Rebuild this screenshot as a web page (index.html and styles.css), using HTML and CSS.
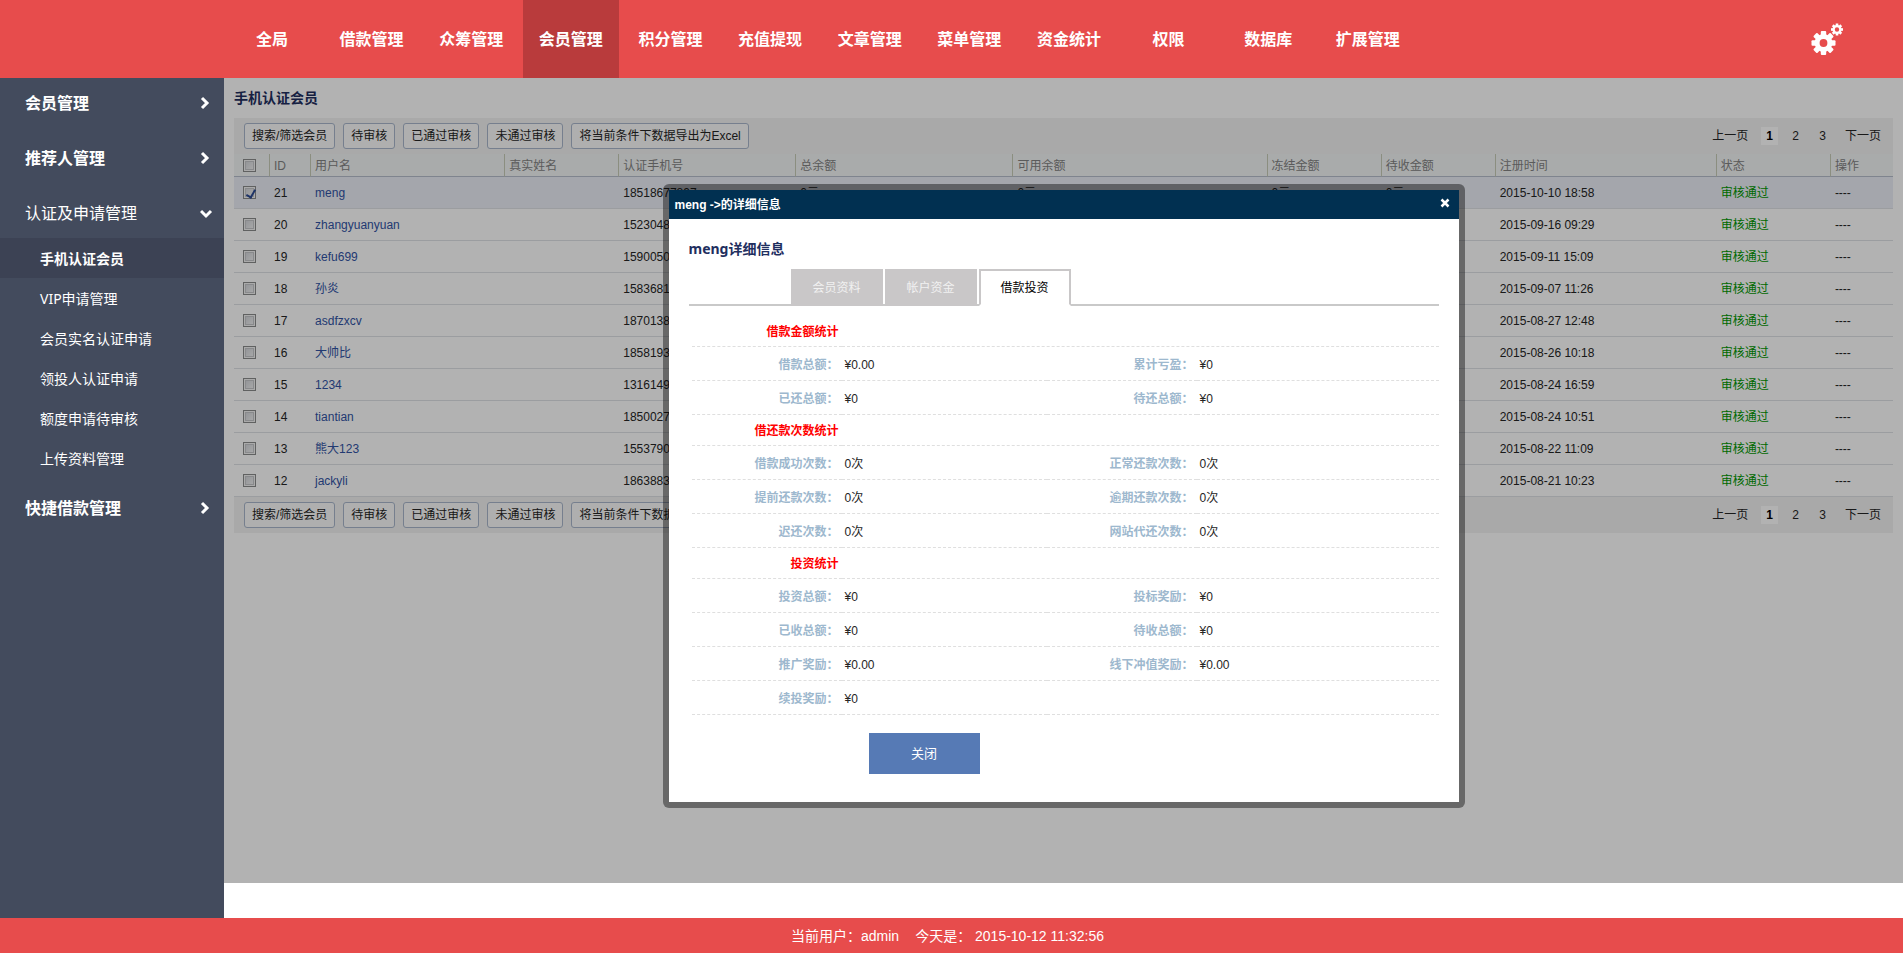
FILE: index.html
```html
<!DOCTYPE html>
<html lang="zh-CN">
<head>
<meta charset="utf-8">
<title>手机认证会员</title>
<link rel="stylesheet" href="styles.css">
</head>
<body>
<header class="topbar">
  <nav class="topnav">
    <a href="#">全局</a>
    <a href="#">借款管理</a>
    <a href="#">众筹管理</a>
    <a href="#" class="active">会员管理</a>
    <a href="#">积分管理</a>
    <a href="#">充值提现</a>
    <a href="#">文章管理</a>
    <a href="#">菜单管理</a>
    <a href="#">资金统计</a>
    <a href="#">权限</a>
    <a href="#">数据库</a>
    <a href="#">扩展管理</a>
  </nav>
  <button type="button" class="gear" aria-label="设置">
    <svg width="34" height="34" viewBox="0 0 34 34">
      <g transform="translate(12.5 21)">
        <circle r="6.4" fill="none" stroke="#fff" stroke-width="5"/>
        <g fill="#fff">
          <rect x="-2.7" y="-12" width="5.4" height="5" rx="1"/>
          <rect x="-2.7" y="-12" width="5.4" height="5" rx="1" transform="rotate(45)"/>
          <rect x="-2.7" y="-12" width="5.4" height="5" rx="1" transform="rotate(90)"/>
          <rect x="-2.7" y="-12" width="5.4" height="5" rx="1" transform="rotate(135)"/>
          <rect x="-2.7" y="-12" width="5.4" height="5" rx="1" transform="rotate(180)"/>
          <rect x="-2.7" y="-12" width="5.4" height="5" rx="1" transform="rotate(225)"/>
          <rect x="-2.7" y="-12" width="5.4" height="5" rx="1" transform="rotate(270)"/>
          <rect x="-2.7" y="-12" width="5.4" height="5" rx="1" transform="rotate(315)"/>
        </g>
      </g>
      <g transform="translate(26 7.5)">
        <circle r="3.4" fill="none" stroke="#fff" stroke-width="2.4"/>
        <g fill="#fff">
          <rect x="-1.3" y="-6" width="2.6" height="2.6"/>
          <rect x="-1.3" y="-6" width="2.6" height="2.6" transform="rotate(45)"/>
          <rect x="-1.3" y="-6" width="2.6" height="2.6" transform="rotate(90)"/>
          <rect x="-1.3" y="-6" width="2.6" height="2.6" transform="rotate(135)"/>
          <rect x="-1.3" y="-6" width="2.6" height="2.6" transform="rotate(180)"/>
          <rect x="-1.3" y="-6" width="2.6" height="2.6" transform="rotate(225)"/>
          <rect x="-1.3" y="-6" width="2.6" height="2.6" transform="rotate(270)"/>
          <rect x="-1.3" y="-6" width="2.6" height="2.6" transform="rotate(315)"/>
        </g>
      </g>
    </svg>
  </button>
</header>

<div class="middle">
  <nav class="sidebar">
    <a href="#" class="group">会员管理<svg width="14" height="14" viewBox="0 0 14 14"><path d="M2 2l5 5-5 5"/></svg></a>
    <a href="#" class="group">推荐人管理<svg width="14" height="14" viewBox="0 0 14 14"><path d="M2 2l5 5-5 5"/></svg></a>
    <a href="#" class="group open">认证及申请管理<svg width="14" height="14" viewBox="0 0 14 14"><path d="M1 5l5 5 5-5"/></svg></a>
    <div class="submenu">
      <a href="#" class="active">手机认证会员</a>
      <a href="#">VIP申请管理</a>
      <a href="#">会员实名认证申请</a>
      <a href="#">领投人认证申请</a>
      <a href="#">额度申请待审核</a>
      <a href="#">上传资料管理</a>
    </div>
    <a href="#" class="group">快捷借款管理<svg width="14" height="14" viewBox="0 0 14 14"><path d="M2 2l5 5-5 5"/></svg></a>
  </nav>

  <div class="frame">
    <main class="content">
      <h1>手机认证会员</h1>
      <div class="toolbar">
        <button type="button">搜索/筛选会员</button>
        <button type="button">待审核</button>
        <button type="button">已通过审核</button>
        <button type="button">未通过审核</button>
        <button type="button">将当前条件下数据导出为Excel</button>
        <nav class="pager"><a href="#">上一页</a><span>1</span><a href="#">2</a><a href="#">3</a><a href="#">下一页</a></nav>
      </div>
      <table class="list">
        <colgroup>
          <col class="c-check"><col class="c-id"><col class="c-user"><col class="c-name"><col class="c-phone"><col class="c-total"><col class="c-avail"><col class="c-money"><col class="c-money"><col class="c-time"><col class="c-money"><col class="c-op">
        </colgroup>
        <thead>
          <tr><th><input type="checkbox" aria-label="全选"></th><th>ID</th><th>用户名</th><th>真实姓名</th><th>认证手机号</th><th>总余额</th><th>可用余额</th><th>冻结金额</th><th>待收金额</th><th>注册时间</th><th>状态</th><th>操作</th></tr>
        </thead>
        <tbody>
          <tr class="selected"><td><input type="checkbox" aria-label="选择 21" checked></td><td>21</td><td><a href="#">meng</a></td><td></td><td>18518677897</td><td>0元</td><td>0元</td><td>0元</td><td>0元</td><td>2015-10-10 18:58</td><td class="ok">审核通过</td><td>----</td></tr>
          <tr><td><input type="checkbox" aria-label="选择 20"></td><td>20</td><td><a href="#">zhangyuanyuan</a></td><td></td><td>1523048</td><td></td><td></td><td></td><td></td><td>2015-09-16 09:29</td><td class="ok">审核通过</td><td>----</td></tr>
          <tr><td><input type="checkbox" aria-label="选择 19"></td><td>19</td><td><a href="#">kefu699</a></td><td></td><td>1590050</td><td></td><td></td><td></td><td></td><td>2015-09-11 15:09</td><td class="ok">审核通过</td><td>----</td></tr>
          <tr><td><input type="checkbox" aria-label="选择 18"></td><td>18</td><td><a href="#">孙炎</a></td><td></td><td>1583681</td><td></td><td></td><td></td><td></td><td>2015-09-07 11:26</td><td class="ok">审核通过</td><td>----</td></tr>
          <tr><td><input type="checkbox" aria-label="选择 17"></td><td>17</td><td><a href="#">asdfzxcv</a></td><td></td><td>1870138</td><td></td><td></td><td></td><td></td><td>2015-08-27 12:48</td><td class="ok">审核通过</td><td>----</td></tr>
          <tr><td><input type="checkbox" aria-label="选择 16"></td><td>16</td><td><a href="#">大帅比</a></td><td></td><td>1858193</td><td></td><td></td><td></td><td></td><td>2015-08-26 10:18</td><td class="ok">审核通过</td><td>----</td></tr>
          <tr><td><input type="checkbox" aria-label="选择 15"></td><td>15</td><td><a href="#">1234</a></td><td></td><td>1316149</td><td></td><td></td><td></td><td></td><td>2015-08-24 16:59</td><td class="ok">审核通过</td><td>----</td></tr>
          <tr><td><input type="checkbox" aria-label="选择 14"></td><td>14</td><td><a href="#">tiantian</a></td><td></td><td>1850027</td><td></td><td></td><td></td><td></td><td>2015-08-24 10:51</td><td class="ok">审核通过</td><td>----</td></tr>
          <tr><td><input type="checkbox" aria-label="选择 13"></td><td>13</td><td><a href="#">熊大123</a></td><td></td><td>1553790</td><td></td><td></td><td></td><td></td><td>2015-08-22 11:09</td><td class="ok">审核通过</td><td>----</td></tr>
          <tr><td><input type="checkbox" aria-label="选择 12"></td><td>12</td><td><a href="#">jackyli</a></td><td></td><td>1863883</td><td></td><td></td><td></td><td></td><td>2015-08-21 10:23</td><td class="ok">审核通过</td><td>----</td></tr>
        </tbody>
      </table>
      <div class="toolbar">
        <button type="button">搜索/筛选会员</button>
        <button type="button">待审核</button>
        <button type="button">已通过审核</button>
        <button type="button">未通过审核</button>
        <button type="button">将当前条件下数据导出为Excel</button>
        <nav class="pager"><a href="#">上一页</a><span>1</span><a href="#">2</a><a href="#">3</a><a href="#">下一页</a></nav>
      </div>
    </main>

    <div class="overlay">
      <section class="dialog" role="dialog" aria-labelledby="dialog-title">
        <div class="dialog-title">
          <span id="dialog-title">meng -&gt;的详细信息</span>
          <button type="button" aria-label="关闭窗口"><svg width="10" height="10" viewBox="0 0 10 10"><path d="M1.5 1.5l7 7M8.5 1.5l-7 7"/></svg></button>
        </div>
        <div class="dialog-body">
          <h2>meng详细信息</h2>
          <div class="tabs" role="tablist">
            <button type="button" role="tab">会员资料</button>
            <button type="button" role="tab">帐户资金</button>
            <button type="button" role="tab" class="active" aria-selected="true">借款投资</button>
          </div>
          <table class="detail">
            <colgroup><col class="d-label"><col class="d-value"><col class="d-label"><col class="d-last"></colgroup>
            <tbody>
              <tr class="section"><th>借款金额统计</th><td colspan="3"></td></tr>
              <tr><th>借款总额<span class="colon">：</span></th><td>¥0.00</td><th>累计亏盈<span class="colon">：</span></th><td>¥0</td></tr>
              <tr><th>已还总额<span class="colon">：</span></th><td>¥0</td><th>待还总额<span class="colon">：</span></th><td>¥0</td></tr>
              <tr class="section"><th>借还款次数统计</th><td colspan="3"></td></tr>
              <tr><th>借款成功次数<span class="colon">：</span></th><td>0次</td><th>正常还款次数<span class="colon">：</span></th><td>0次</td></tr>
              <tr><th>提前还款次数<span class="colon">：</span></th><td>0次</td><th>逾期还款次数<span class="colon">：</span></th><td>0次</td></tr>
              <tr><th>迟还次数<span class="colon">：</span></th><td>0次</td><th>网站代还次数<span class="colon">：</span></th><td>0次</td></tr>
              <tr class="section"><th>投资统计</th><td colspan="3"></td></tr>
              <tr><th>投资总额<span class="colon">：</span></th><td>¥0</td><th>投标奖励<span class="colon">：</span></th><td>¥0</td></tr>
              <tr><th>已收总额<span class="colon">：</span></th><td>¥0</td><th>待收总额<span class="colon">：</span></th><td>¥0</td></tr>
              <tr><th>推广奖励<span class="colon">：</span></th><td>¥0.00</td><th>线下冲值奖励<span class="colon">：</span></th><td>¥0.00</td></tr>
              <tr><th>续投奖励<span class="colon">：</span></th><td>¥0</td><td colspan="2"></td></tr>
            </tbody>
          </table>
          <button type="button" class="close">关闭</button>
        </div>
      </section>
    </div>
  </div>
</div>

<footer class="footer"><span>当前用户<span class="colon">：</span>admin</span><span>今天是<span class="colon">：</span> 2015-10-12 11:32:56</span></footer>
</body>
</html>
```

FILE: styles.css
```css
* {
  box-sizing: border-box;
}

body {
  margin: 0;
  min-height: 100vh;
  display: flex;
  flex-direction: column;
  background: #fff;
  color: #252525;
  font: 12px/18px "Liberation Sans", "Noto Sans CJK SC", sans-serif;
}

a {
  color: inherit;
  text-decoration: none;
}

button {
  font: inherit;
  color: inherit;
  cursor: pointer;
}

/* full-width colon centred in its cell */
.colon {
  font-family: "Noto Sans CJK TC", sans-serif;
  line-height: 1;
}

/* top bar */
.topbar {
  display: flex;
  justify-content: space-between;
  align-items: center;
  height: 78px;
  padding: 0 58px 0 224px;
  background: #e74c4c;
  color: #fff;
}

.topnav {
  font-size: 13px;
  white-space: nowrap;
}

.topnav a {
  display: inline-block;
  width: 96px;
  height: 78px;
  font-size: 16px;
  font-weight: bold;
  line-height: 80px;
  text-align: center;
  vertical-align: top;
}

.topnav a.active {
  background: #b93b3c;
}

.gear {
  display: flex;
  padding: 0;
  border: 0;
  background: none;
}

/* side menu */
.middle {
  flex: 1;
  display: flex;
}

.sidebar {
  flex: none;
  width: 224px;
  background: #434b5d;
  color: #fff;
  font-family: "Noto Sans", "Noto Sans CJK SC", sans-serif;
}

.group {
  display: flex;
  justify-content: space-between;
  align-items: center;
  height: 50px;
  margin-bottom: 5px;
  padding: 0 10px 0 25px;
  font-size: 16px;
  font-weight: bold;
}

.group svg {
  fill: none;
  stroke: #fff;
  stroke-width: 3;
}

.group.open {
  margin-bottom: 0;
  font-weight: normal;
}

.submenu {
  margin-bottom: 5px;
}

.submenu a {
  display: block;
  height: 40px;
  padding-left: 40px;
  font-size: 14px;
  line-height: 42px;
}

.submenu a.active {
  background: #3c4254;
  font-weight: bold;
}

/* content */
.frame {
  flex: 1;
  position: relative;
  min-width: 0;
  margin-bottom: 35px;
}

.content {
  padding: 0 10px;
}

h1 {
  height: 40px;
  margin: 0;
  color: #1f2f5f;
  font-size: 14px;
  line-height: 40px;
}

.toolbar {
  display: flex;
  align-items: center;
  gap: 8px;
  height: 36px;
  padding: 0 7px 0 10px;
  background: #f2f2f2;
}

.toolbar button {
  height: 26px;
  padding: 0 7px;
  border: 1px solid #a9b6cc;
  border-radius: 3px;
  background: #fbfbfb;
  line-height: 24px;
  white-space: nowrap;
}

.pager {
  display: flex;
  gap: 8px;
  margin-left: auto;
}

.pager a,
.pager span {
  min-width: 19px;
  padding: 0 5px;
  text-align: center;
}

.pager span {
  min-width: 0;
  background: #fff;
  color: #000;
  font-weight: bold;
}

.list,
.detail {
  width: 100%;
  border-collapse: separate;
  border-spacing: 0;
  table-layout: fixed;
}

.c-check { width: 36px; }
.c-id { width: 41px; }
.c-user { width: 194px; }
.c-name { width: 114px; }
.c-phone { width: 177px; }
.c-total { width: 217px; }
.c-avail { width: 254px; }
.c-money { width: 114px; }
.c-time { width: 221px; }
.c-op { width: 62px; }

.list th {
  height: 23px;
  padding: 2px 4px 0;
  border-right: 1px solid #c8ccb8;
  border-bottom: 1px solid #b7bdcc;
  background: #f2f5f5;
  color: #838383;
  font-weight: normal;
  line-height: 20px;
  text-align: left;
}

.list th:last-child {
  border-right: 0;
}

.list td {
  height: 32px;
  padding: 0 4px;
  border-bottom: 1px solid #dfe1e6;
}

.list th:first-child,
.list td:first-child {
  padding-top: 0;
  padding-left: 9px;
}

.list .selected td {
  background: #ebeef6;
}

.list td a {
  color: #3253a4;
}

.list .ok {
  color: #009800;
}

.list input {
  appearance: none;
  position: relative;
  display: block;
  width: 13px;
  height: 13px;
  margin: 0;
  border: 1px solid #8a8b8b;
  background: linear-gradient(135deg, #cdd0d5, #f6f6f6);
  box-shadow: inset 0 0 0 1px #f4f4f4, inset 0 0 0 2px #c4c6c9;
}

.list input:checked::after {
  content: "";
  position: absolute;
  left: 4px;
  top: 1px;
  width: 4px;
  height: 8px;
  border: solid #2b4a94;
  border-width: 0 2px 2px 0;
  transform: rotate(30deg);
}

/* dialog */
.overlay {
  position: absolute;
  inset: 0;
  display: flex;
  justify-content: center;
  align-items: flex-start;
  padding-top: 106px;
  background: rgba(0, 0, 0, 0.3);
}

.dialog {
  width: 802px;
  border: 6px solid rgba(0, 0, 0, 0.41);
  border-radius: 6px;
  background: #fff;
  background-clip: padding-box;
}

.dialog-title {
  display: flex;
  justify-content: space-between;
  align-items: center;
  height: 29px;
  padding: 0 9px 0 6px;
  background: #013051;
  color: #fff;
  font-weight: bold;
}

.dialog-title button {
  display: flex;
  padding: 0 0 3px;
  border: 0;
  background: none;
}

.dialog-title svg {
  fill: none;
  stroke: #fff;
  stroke-width: 2.5;
}

.dialog-body {
  padding: 20px 20px 28px;
}

h2 {
  margin: 0;
  color: #1f2f5f;
  font: bold 14px/20px "Noto Sans", "Noto Sans CJK SC", sans-serif;
}

.tabs {
  display: flex;
  gap: 2px;
  margin: 10px 0;
  padding-left: 102px;
  background: linear-gradient(#c9c9c9, #c9c9c9) bottom / 100% 2px no-repeat;
}

.tabs button {
  width: 92px;
  height: 37px;
  padding: 0;
  border: 2px solid #c9c7c8;
  background: #c9c7c8;
  color: #f1f1f1;
}

.tabs .active {
  border-bottom-color: #fff;
  background: #fff;
  color: #000;
}

.detail {
  padding-left: 3px;
}

.d-label { width: 150px; }
.d-value { width: 205px; }
.d-last { width: 242px; }

.detail th,
.detail td {
  height: 34px;
  padding: 2px 3px 0;
  border-bottom: 1px dashed #dfdfdf;
}

.detail th {
  padding-left: 0;
  color: #9db8ce;
  text-align: right;
}

.detail td {
  text-align: left;
}

.detail .section th,
.detail .section td {
  height: 31px;
}

.detail .section th {
  color: #f00;
}

.close {
  display: block;
  width: 111px;
  height: 41px;
  margin: 18px 0 0 180px;
  border: 0;
  background: #567ab5;
  color: #fff;
  font-size: 13px;
}

/* footer */
.footer {
  display: flex;
  justify-content: center;
  gap: 16px;
  height: 35px;
  padding-right: 8px;
  background: #e74c4c;
  color: #fff;
  font-size: 14px;
  line-height: 36px;
}
```
